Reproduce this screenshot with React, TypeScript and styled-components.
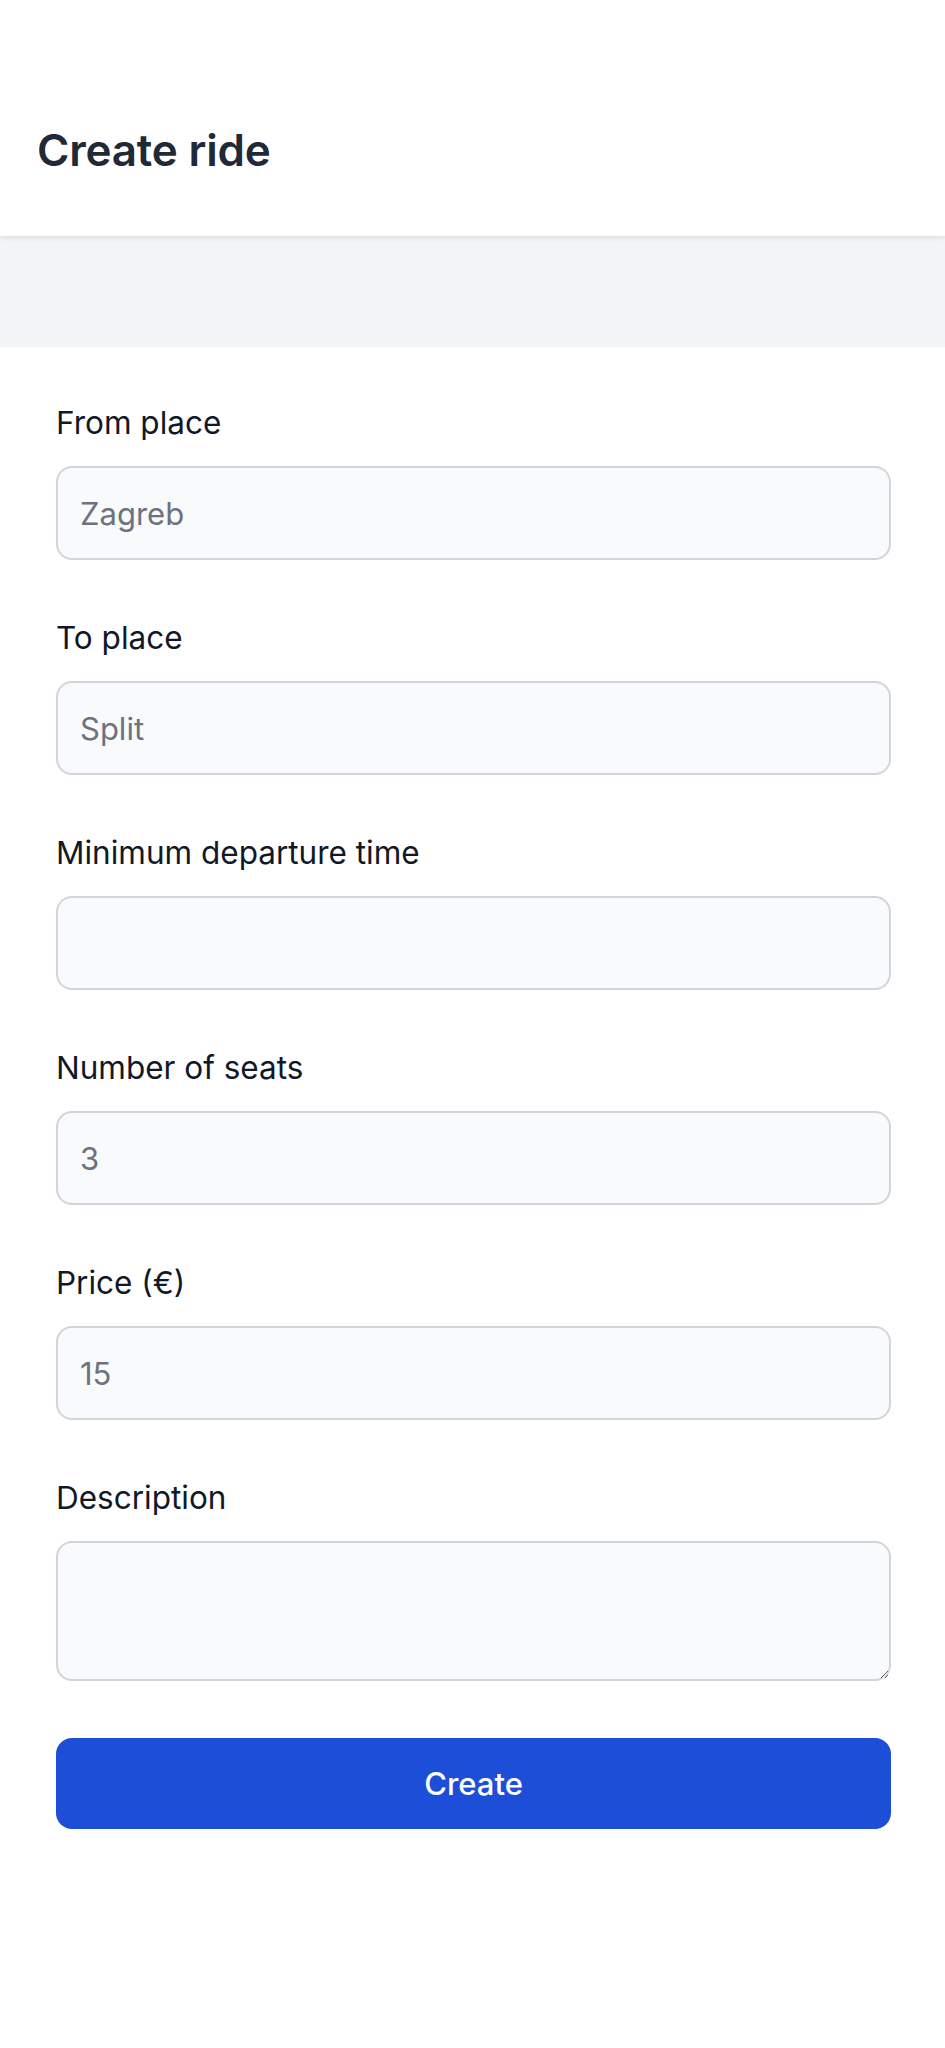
import React from "react";
import styled, { createGlobalStyle } from "styled-components";

const GlobalStyle = createGlobalStyle`
  html, body {
    margin: 0;
    padding: 0;
    background: #ffffff;
    font-family: Inter, "Noto Sans", "Liberation Sans", sans-serif;
  }
  * { box-sizing: border-box; }
`;

const Page = styled.div`
  min-height: 2048px;
  background: #ffffff;
  display: flex;
  flex-direction: column;
`;

const Header = styled.header`
  height: 236px;
  padding: 124px 37px 0;
  background: #ffffff;
  box-shadow: 0 2px 5px rgba(0, 0, 0, 0.09);
  position: relative;
  z-index: 1;
`;

const Title = styled.h1`
  margin: 0;
  font-size: 44px;
  line-height: 53px;
  font-weight: 600;
  color: #1f2937;
  letter-spacing: -0.2px;
`;

const Band = styled.div`
  height: 111px;
  background: #f3f4f6;
`;

const Form = styled.form`
  display: flex;
  flex-direction: column;
  padding: 53px 54px 0 56px;
`;

const Field = styled.div`
  display: flex;
  flex-direction: column;
  margin-bottom: 55px;
`;

const Label = styled.label`
  display: block;
  font-size: 31.5px;
  line-height: 45px;
  font-weight: 400;
  color: #111827;
  margin-bottom: 21px;
`;

const Input = styled.input`
  width: 100%;
  height: 94px;
  padding: 0 22px;
  border: 2px solid #d1d5db;
  border-radius: 16px;
  background: #f9fafb;
  font-family: inherit;
  font-size: 31px;
  color: #111827;
  outline: none;
  &::placeholder { color: #6b7280; }
`;

const TextArea = styled.textarea`
  width: 100%;
  height: 140px;
  padding: 20px 22px;
  border: 2px solid #d1d5db;
  border-radius: 16px;
  background: #f9fafb;
  font-family: inherit;
  font-size: 31px;
  color: #111827;
  outline: none;
  resize: vertical;
  display: block;
`;

const SubmitButton = styled.button`
  margin-top: 2px;
  height: 91px;
  width: 100%;
  border: none;
  border-radius: 16px;
  background: #1d4ed8;
  color: #ffffff;
  font-family: inherit;
  font-size: 31px;
  font-weight: 500;
  cursor: pointer;
`;

const fields = [
  { id: "from", label: "From place", placeholder: "Zagreb" },
  { id: "to", label: "To place", placeholder: "Split" },
  { id: "time", label: "Minimum departure time", placeholder: "" },
  { id: "seats", label: "Number of seats", placeholder: "3" },
  { id: "price", label: "Price (€)", placeholder: "15" },
];

export default function App() {
  return (
    <Page>
      <GlobalStyle />
      <Header>
        <Title>Create ride</Title>
      </Header>
      <Band />
      <Form onSubmit={(e) => e.preventDefault()}>
        {fields.map((f) => (
          <Field key={f.id}>
            <Label htmlFor={f.id}>{f.label}</Label>
            <Input id={f.id} type="text" placeholder={f.placeholder} />
          </Field>
        ))}
        <Field>
          <Label htmlFor="desc">Description</Label>
          <TextArea id="desc" />
        </Field>
        <SubmitButton type="submit">Create</SubmitButton>
      </Form>
    </Page>
  );
}
